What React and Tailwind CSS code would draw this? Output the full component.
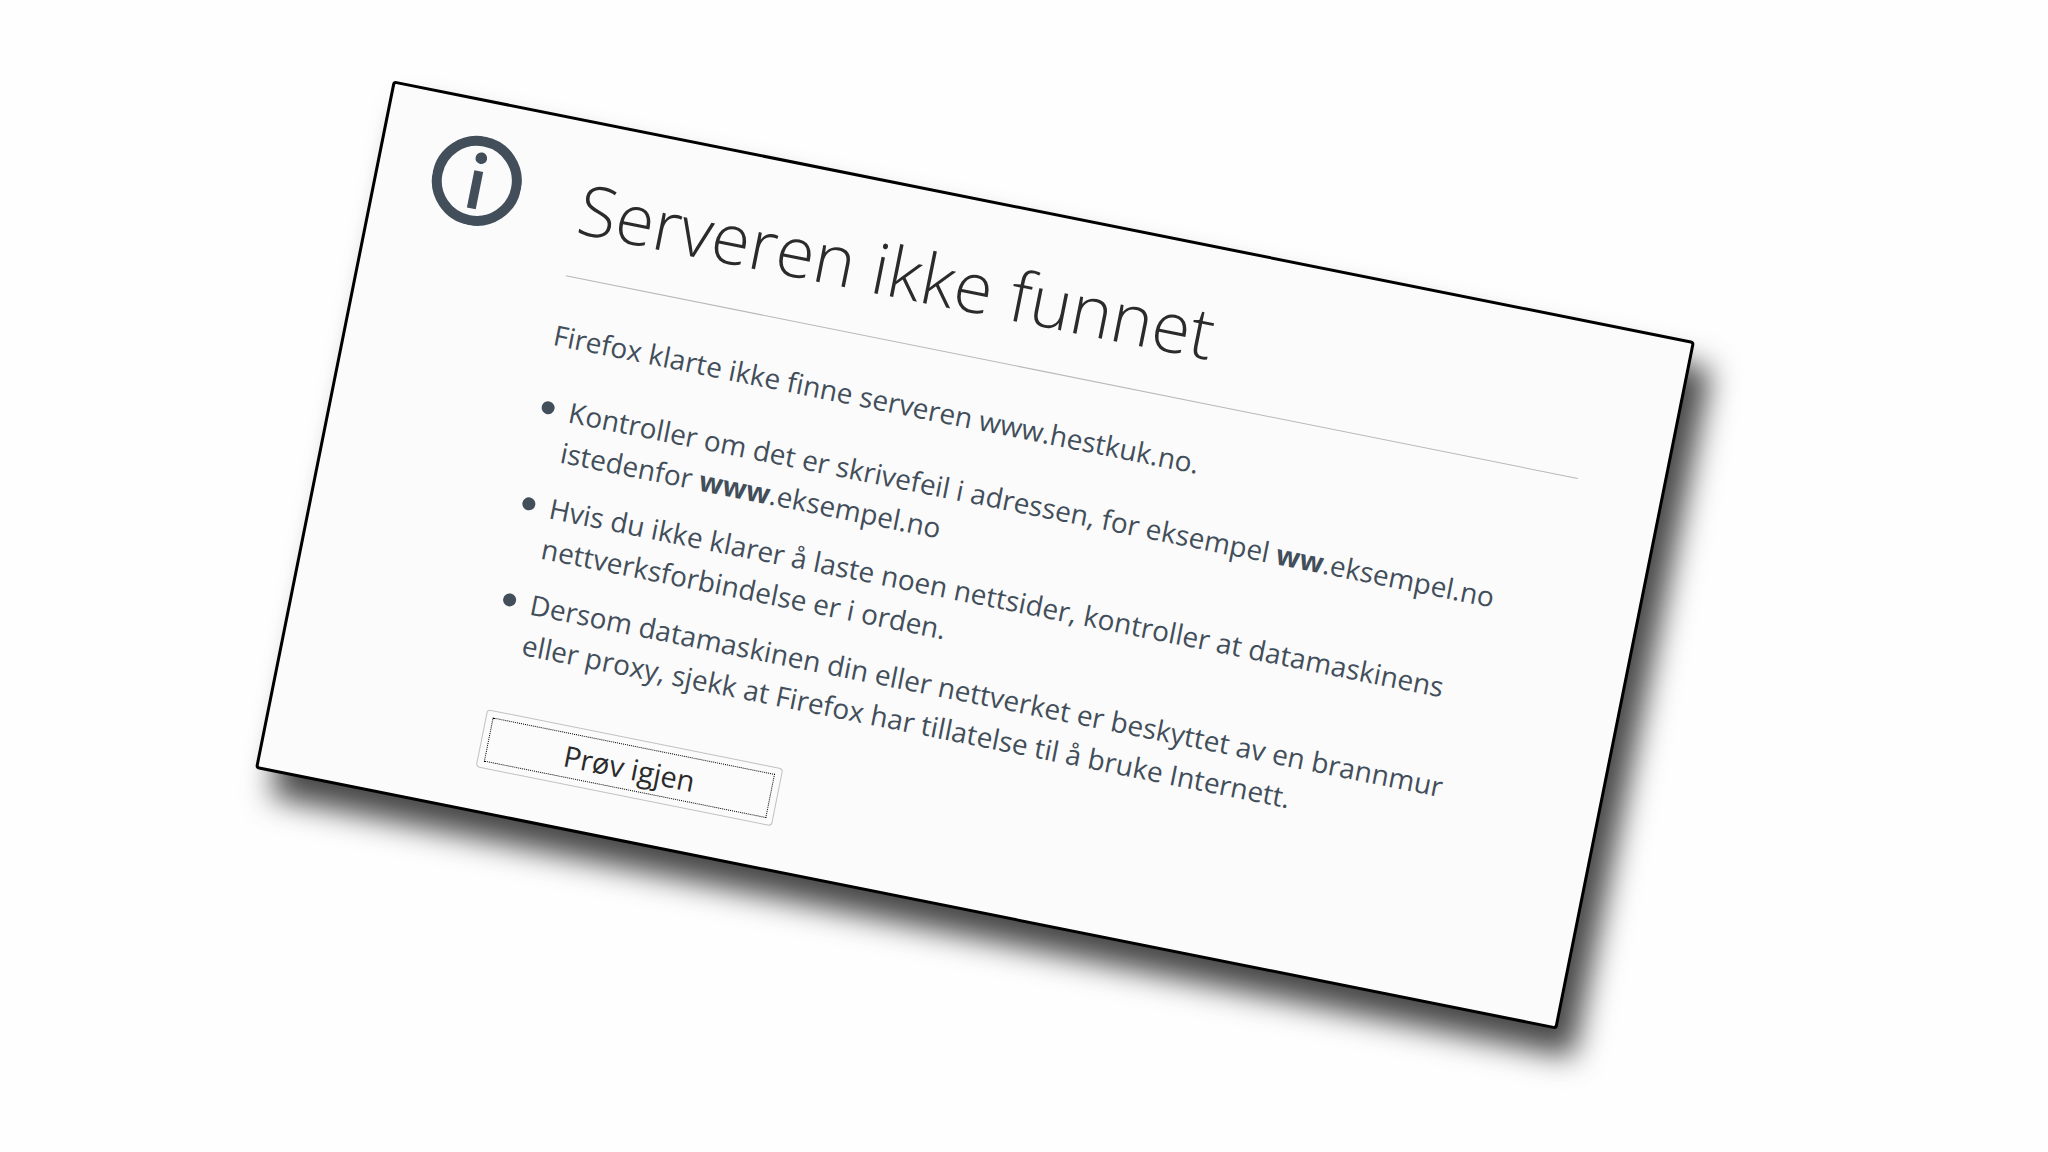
import React from "react";

const tips = [
  {
    id: "address",
    text: (
      <>
        Kontroller om det er skrivefeil i adressen, for eksempel <b>ww</b>.eksempel.no
        <br />
        istedenfor <b>www</b>.eksempel.no
      </>
    ),
  },
  {
    id: "network",
    text: (
      <>
        Hvis du ikke klarer å laste noen nettsider, kontroller at datamaskinens
        <br />
        nettverksforbindelse er i orden.
      </>
    ),
  },
  {
    id: "firewall",
    text: (
      <>
        Dersom datamaskinen din eller nettverket er beskyttet av en brannmur
        <br />
        eller proxy, sjekk at Firefox har tillatelse til å bruke Internett.
      </>
    ),
  },
];

const InfoIcon = () => (
  <svg viewBox="0 0 90 90" className="w-[90px] h-[90px] shrink-0" aria-hidden="true">
    <circle cx="45" cy="45" r="40" fill="none" stroke="#424e5a" strokeWidth="10" />
    <circle cx="45" cy="22" r="5.8" fill="#424e5a" />
    <rect x="40.5" y="35" width="9" height="38" fill="#424e5a" />
  </svg>
);

const App = () => {
  return (
    <div className="min-h-screen overflow-hidden bg-[#fefefe] flex items-center justify-center pr-[99px] pb-[43px] font-['Open_Sans',sans-serif]">
      <main className="w-full max-w-[1328px] rotate-[11.33deg] flex items-start gap-[61px] pt-[34px] pb-[42px] pl-[54px] pr-[85px] border-3 border-black rounded-sm bg-[#fbfbfb] text-[#424e5a] shadow-[21px_24px_30px_rgba(0,0,0,0.72)]">
        <InfoIcon />
        <div className="flex-1 pt-1">
          <h1 className="text-[70px] leading-[92px] font-light text-[#2b2b2b] pb-6 border-b border-[#b8b8b8]">
            Serveren ikke funnet
          </h1>
          <p className="mt-[39px] text-[28px] leading-[41px]">
            Firefox klarte ikke finne serveren www.hestkuk.no.
          </p>
          <ul className="mt-8 space-y-4 text-[28px] leading-[41px]">
            {tips.map((tip) => (
              <li key={tip.id} className="flex items-start">
                <span className="w-[13px] h-[13px] mt-[14px] ml-[2px] mr-[15px] shrink-0 rounded-full bg-[#424e5a]" />
                <span>{tip.text}</span>
              </li>
            ))}
          </ul>
          <button
            type="button"
            className="mt-[50px] ml-2 w-[302px] h-[59px] p-[6px] block border border-[#c1c1c1] rounded-sm text-[29px] text-[#2b2b2b]"
          >
            <span className="flex h-full items-center justify-center border border-dotted border-black">
              Prøv igjen
            </span>
          </button>
        </div>
      </main>
    </div>
  );
};

export default App;
